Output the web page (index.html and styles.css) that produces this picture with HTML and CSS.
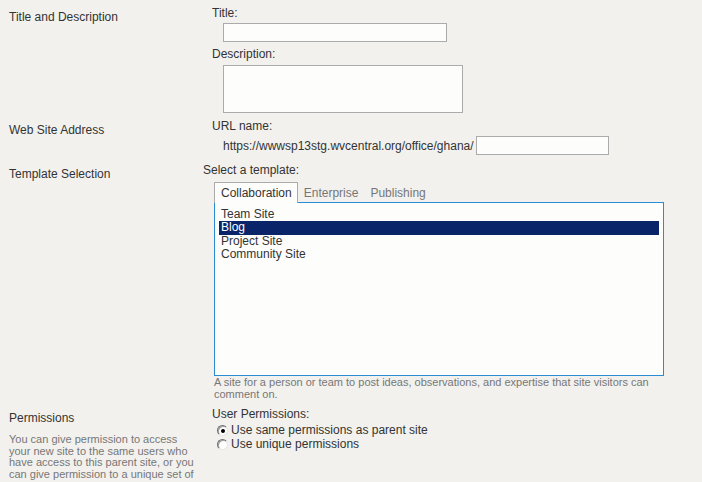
FILE: index.html
```html
<!DOCTYPE html>
<html lang="en">
<head>
<meta charset="utf-8">
<title>New SharePoint Site</title>
<link rel="stylesheet" href="styles.css">
</head>
<body>
<div class="form">
  <section class="sec sec-title">
    <div class="left">
      <h3 class="sec-name">Title and Description</h3>
    </div>
    <div class="right">
      <label class="fld-label" for="title">Title:</label>
      <input id="title" class="txt title-input" type="text">
      <label class="fld-label gap-desc" for="desc">Description:</label>
      <textarea id="desc" class="txt desc-input"></textarea>
    </div>
  </section>

  <section class="sec sec-url">
    <div class="left">
      <h3 class="sec-name">Web Site Address</h3>
    </div>
    <div class="right">
      <label class="fld-label" for="url">URL name:</label>
      <div class="url-row">
        <span class="url-prefix">https://wwwsp13stg.wvcentral.org/office/ghana/</span>
        <input id="url" class="txt url-input" type="text">
      </div>
    </div>
  </section>

  <section class="sec sec-template">
    <div class="left">
      <h3 class="sec-name">Template Selection</h3>
    </div>
    <div class="right">
      <div class="plain-label">Select a template:</div>
      <div class="tabs">
        <span class="tab active">Collaboration</span>
        <span class="tab">Enterprise</span>
        <span class="tab">Publishing</span>
      </div>
      <ul class="tpl-list">
        <li class="tpl">Team Site</li>
        <li class="tpl selected">Blog</li>
        <li class="tpl">Project Site</li>
        <li class="tpl">Community Site</li>
      </ul>
      <p class="tpl-desc">A site for a person or team to post ideas, observations, and expertise that site visitors can comment on.</p>
    </div>
  </section>

  <section class="sec sec-perm">
    <div class="left">
      <h3 class="sec-name">Permissions</h3>
      <p class="sec-desc">You can give permission to access your new site to the same users who have access to this parent site, or you can give permission to a unique set of users.</p>
    </div>
    <div class="right">
      <div class="fld-label">User Permissions:</div>
      <div class="radio-group">
        <div class="radio-row"><span class="radio checked"></span><span>Use same permissions as parent site</span></div>
        <div class="radio-row"><span class="radio"></span><span>Use unique permissions</span></div>
      </div>
    </div>
  </section>
</div>
</body>
</html>
```

FILE: styles.css
```css
html {
  overflow: hidden;
}

body {
  margin: 0;
  background: #f2f1ee;
  color: #333333;
  font-family: "Liberation Sans", Arial, sans-serif;
  font-size: 12px;
  line-height: 14px;
}

.form {
  display: flex;
  flex-direction: column;
}

.sec {
  display: flex;
}

.left {
  width: 203px;
  flex: none;
  box-sizing: border-box;
  padding: 10px 6px 0 9px;
}

.right {
  flex: 1;
  padding-top: 6px;
  display: flex;
  flex-direction: column;
  align-items: flex-start;
}

.sec-name {
  margin: 0;
  font-size: 12px;
  font-weight: normal;
  line-height: 14px;
}

.fld-label {
  display: block;
  margin-left: 9px;
}

.plain-label {
  margin-left: 0;
}

.txt {
  box-sizing: border-box;
  margin: 0;
  padding: 0 2px;
  background: #fdfdfc;
  border: 1px solid #ababab;
  border-radius: 0;
  font: inherit;
  outline: none;
}

.title-input {
  margin: 3px 0 0 20px;
  width: 224px;
  height: 19px;
}

.gap-desc {
  margin-top: 5px;
}

.desc-input {
  display: block;
  margin: 4px 0 0 20px;
  width: 240px;
  height: 48px;
  resize: none;
}

.url-row {
  display: flex;
  align-items: center;
  gap: 2px;
  margin: 3px 0 2px 20px;
}

.url-input {
  width: 133px;
  height: 19px;
}

.tabs {
  display: flex;
  margin: 5px 0 0 11px;
  position: relative;
  z-index: 1;
}

.tab {
  padding: 4px 6px 3px 6px;
  color: #777777;
}

.tab.active {
  border: 1px solid #ababab;
  border-bottom: none;
  padding: 3px 5px 3px 6px;
  background: #fdfdfc;
  color: #333333;
}

.tpl-list {
  list-style: none;
  margin: -1px 0 0 11px;
  padding: 5px 4px;
  width: 450px;
  height: 174px;
  box-sizing: border-box;
  background: #fdfdfc;
  border: 1px solid #2a8dd4;
}

.tpl {
  padding-left: 2px;
  line-height: 13.4px;
  height: 13.4px;
}

.tpl.selected {
  background: #0a246a;
  color: #ffffff;
}

.tpl-desc {
  margin: 1px 0 1px 11px;
  width: 450px;
  font-size: 11px;
  line-height: 11.5px;
  color: #777777;
}

.sec-desc {
  margin: 9px 0 0;
  font-size: 11px;
  line-height: 11.7px;
  color: #777777;
}

.radio-group {
  margin: 3px 0 0 14px;
}

.radio-row {
  display: flex;
  align-items: center;
  height: 13.5px;
  line-height: 13.5px;
}

.radio {
  position: relative;
  box-sizing: border-box;
  width: 11px;
  height: 11px;
  margin-right: 3px;
  border-radius: 50%;
  border: 1px solid;
  border-color: #6e6e6e #e6e6e6 #e6e6e6 #6e6e6e;
  background: #ffffff;
  box-shadow: inset 1px 1px 0 #a0a0a0;
}

.radio.checked::after {
  content: "";
  position: absolute;
  left: 2.5px;
  top: 2.5px;
  width: 4px;
  height: 4px;
  border-radius: 50%;
  background: #000000;
}
```
